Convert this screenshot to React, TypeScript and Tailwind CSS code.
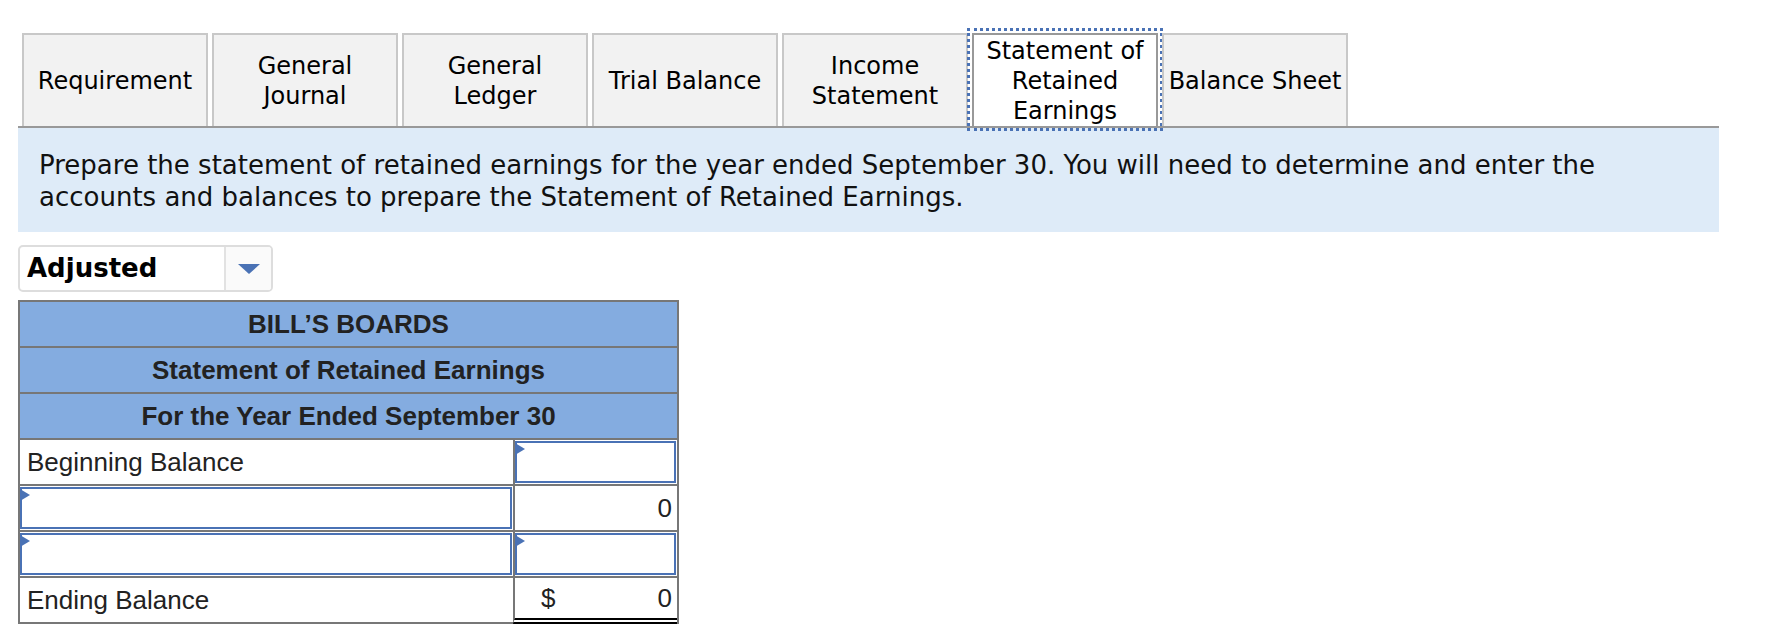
import * as React from "react"

const tabs = [
  { label: ["Requirement"] },
  { label: ["General", "Journal"] },
  { label: ["General", "Ledger"] },
  { label: ["Trial Balance"] },
  { label: ["Income", "Statement"] },
  { label: ["Statement of", "Retained", "Earnings"], active: true },
  { label: ["Balance Sheet"] },
]

const verdana = { fontFamily: "Verdana, 'DejaVu Sans', sans-serif" }
const arial = { fontFamily: "'Liberation Sans', Arial, sans-serif" }

function Corner() {
  return (
    <svg
      className="absolute left-[-2px] top-0"
      width="10"
      height="12"
      viewBox="0 0 10 12"
    >
      <polygon points="0,0 10,6 0,12" fill="#4a72b5" />
    </svg>
  )
}

function InputBox() {
  return (
    <div className="relative h-full w-full border-2 border-[#4a72b5] bg-white">
      <Corner />
    </div>
  )
}

function HeaderRow({ children }: { children: React.ReactNode }) {
  return (
    <div className="flex h-[46px] items-center justify-center border-b-2 border-[#777] bg-[#84ace0] text-[26px] font-bold text-[#222]">
      {children}
    </div>
  )
}

export default function App() {
  return (
    <div className="min-h-[644px] bg-white text-black">
      <div className="ml-[18px] w-[1701px] pt-[33px]">
        <div className="flex gap-[4px] border-b-2 border-[#999] pl-[4px]" style={verdana}>
          {tabs.map((t, i) => (
            <div
              key={i}
              className={
                t.active
                  ? "flex h-[93px] w-[186px] flex-col items-center justify-center border-2 border-b-0 border-[#999] bg-white text-[24px] leading-[30px] outline-3 outline-offset-2 outline-dotted outline-[#4a72b5]"
                  : "flex h-[93px] w-[186px] flex-col items-center justify-center border-2 border-b-0 border-[#c8c8c8] bg-[#f2f2f2] text-[24px] leading-[30px]"
              }
            >
              {t.label.map((l) => (
                <span key={l} className="whitespace-nowrap">
                  {l}
                </span>
              ))}
            </div>
          ))}
        </div>

        <div
          className="bg-[#deebf8] pb-[19px] pl-[21px] pt-[21px] text-[26px] leading-[32px] text-[#111]"
          style={verdana}
        >
          Prepare the statement of retained earnings for the year ended September 30. You will need to determine and enter the
          <br />
          accounts and balances to prepare the Statement of Retained Earnings.
        </div>

        <div className="mt-[13px] flex h-[47px] w-[255px] overflow-hidden rounded-[5px] border-2 border-[#ddd]">
          <div
            className="flex flex-1 items-center pl-[7px] text-[26px] font-bold"
            style={verdana}
          >
            Adjusted
          </div>
          <div className="flex w-[47px] items-center justify-center border-l-2 border-[#e2e2e2] bg-[#fafafa]">
            <svg width="22" height="10" viewBox="0 0 22 10">
              <polygon points="0,0 22,0 11,10" fill="#4a72b5" />
            </svg>
          </div>
        </div>

        <div
          className="mt-[8px] w-[661px] border-x-2 border-t-2 border-[#777] text-[#222]"
          style={arial}
        >
          <HeaderRow>BILL’S BOARDS</HeaderRow>
          <HeaderRow>Statement of Retained Earnings</HeaderRow>
          <HeaderRow>For the Year Ended September 30</HeaderRow>

          <div className="flex h-[46px] border-b-2 border-[#777] text-[26px]">
            <div className="flex w-[493px] items-center pl-[7px]">Beginning Balance</div>
            <div className="flex-1 border-l-2 border-[#777] p-[1px] pl-0">
              <InputBox />
            </div>
          </div>

          <div className="flex h-[46px] border-b-2 border-[#777] text-[26px]">
            <div className="w-[493px] p-[1px] pl-0">
              <InputBox />
            </div>
            <div className="flex flex-1 items-center justify-end border-l-2 border-[#777] pr-[5px]">
              0
            </div>
          </div>

          <div className="flex h-[46px] border-b-2 border-[#777] text-[26px]">
            <div className="w-[493px] p-[1px] pl-0">
              <InputBox />
            </div>
            <div className="flex-1 border-l-2 border-[#777] p-[1px] pl-0">
              <InputBox />
            </div>
          </div>

          <div className="flex h-[46px] text-[26px]">
            <div className="flex w-[493px] items-center border-b-2 border-[#777] pl-[7px]">
              Ending Balance
            </div>
            <div className="flex flex-1 items-center justify-between border-b-[6px] border-l-2 border-double border-b-black border-l-[#777] pl-[26px] pr-[5px]">
              <span>$</span>
              <span>0</span>
            </div>
          </div>
        </div>
      </div>
    </div>
  )
}
